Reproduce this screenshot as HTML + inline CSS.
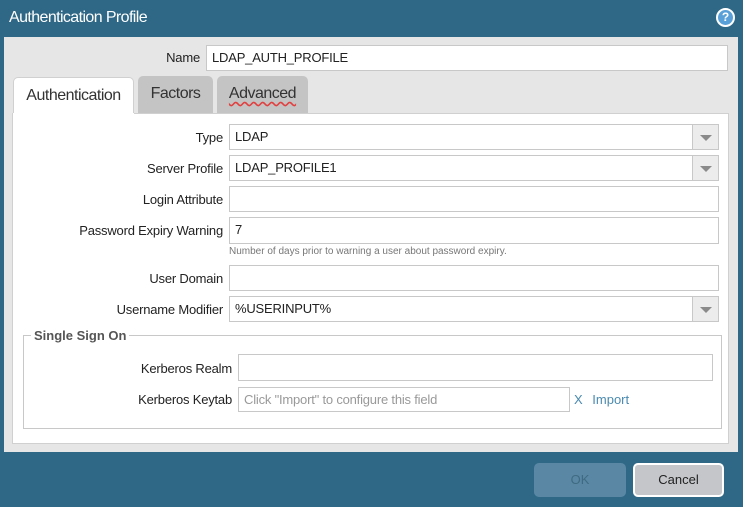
<!DOCTYPE html>
<html><head><style>
*{margin:0;padding:0;box-sizing:border-box}
body{width:743px;height:507px;background:#2f6886;font-family:"Liberation Sans",sans-serif;font-size:13px;color:#222;position:relative;overflow:hidden}
.a{position:absolute}
.lbl{position:absolute;text-align:right;white-space:nowrap;letter-spacing:-0.2px}
.in{position:absolute;background:#fff;border:1px solid #c8c8c8;padding-left:5px;line-height:23px;white-space:nowrap;letter-spacing:-0.2px}
.dd{position:absolute;top:-1px;right:-1px;width:27px;bottom:-1px;background:#ececec;border:1px solid #c8c8c8}
.dd:after{content:"";position:absolute;left:7px;top:10px;border-left:6px solid transparent;border-right:6px solid transparent;border-top:6px solid #8a8a8a}
.tab{position:absolute;border-radius:5px 5px 0 0;text-align:center;font-size:16px;line-height:36px;color:#333;letter-spacing:-0.5px}
</style></head><body>
<div class="a" style="left:9px;top:9px;color:#fff;font-size:16px;letter-spacing:-0.6px">Authentication Profile</div>
<div class="a" style="left:716px;top:8px;width:19px;height:19px;border-radius:50%;background:#5aa0d8;border:2px solid #fff;color:#fff;font-weight:bold;font-size:12px;text-align:center;line-height:15px;">?</div>
<div class="a" style="left:4px;top:37px;width:734px;height:415px;background:#e6e6e6"></div>
<div class="lbl" style="left:100px;width:100px;top:50px">Name</div>
<div class="in" style="left:206px;top:45px;width:522px;height:26px">LDAP_AUTH_PROFILE</div>
<div class="tab" style="left:13px;top:77px;width:121px;height:37px;background:#fff;border:1px solid #d0d0d0;border-bottom:none">Authentication</div>
<div class="tab" style="left:138px;top:76px;width:75px;height:37px;background:#c4c4c4">Factors</div>
<div class="tab" style="left:217px;top:76px;width:91px;height:37px;background:#c4c4c4"><span style="text-decoration:underline wavy #e04040;text-underline-offset:3px">Advanced</span></div>
<div class="a" style="left:12px;top:113px;width:717px;height:331px;background:#fff;border:1px solid #d0d0d0;border-top:none"></div>
<div class="a" style="left:134px;top:113px;width:595px;height:1px;background:#d0d0d0"></div>
<div class="lbl" style="right:520px;top:130px">Type</div>
<div class="in" style="left:229px;top:124px;width:490px;height:26px">LDAP<div class="dd"></div></div>
<div class="lbl" style="right:520px;top:161px">Server Profile</div>
<div class="in" style="left:229px;top:155px;width:490px;height:26px">LDAP_PROFILE1<div class="dd"></div></div>
<div class="lbl" style="right:520px;top:192px">Login Attribute</div>
<div class="in" style="left:229px;top:186px;width:490px;height:26px"></div>
<div class="lbl" style="right:520px;top:223px">Password Expiry Warning</div>
<div class="in" style="left:229px;top:217px;width:490px;height:27px">7</div>
<div class="a" style="left:229px;top:246px;font-size:10px;color:#777">Number of days prior to warning a user about password expiry.</div>
<div class="lbl" style="right:520px;top:271px">User Domain</div>
<div class="in" style="left:229px;top:265px;width:490px;height:26px"></div>
<div class="lbl" style="right:520px;top:302px">Username Modifier</div>
<div class="in" style="left:229px;top:296px;width:490px;height:26px">%USERINPUT%<div class="dd"></div></div>
<div class="a" style="left:23px;top:335px;width:699px;height:94px;border:1px solid #c8c8c8"></div>
<div class="a" style="left:31px;top:328px;background:#fff;padding:0 3px;font-weight:bold;color:#555">Single Sign On</div>
<div class="lbl" style="right:511px;top:361px">Kerberos Realm</div>
<div class="in" style="left:238px;top:354px;width:475px;height:27px"></div>
<div class="lbl" style="right:511px;top:392px">Kerberos Keytab</div>
<div class="in" style="left:238px;top:387px;width:332px;height:25px;color:#999">Click "Import" to configure this field</div>
<div class="a" style="left:574px;top:392px;color:#4a8ab0;word-spacing:6px">X Import</div>
<div class="a" style="left:534px;top:463px;width:92px;height:34px;border-radius:5px;background:#5a88a4;color:#3f6a82;text-align:center;line-height:34px">OK</div>
<div class="a" style="left:633px;top:463px;width:91px;height:34px;border-radius:5px;background:#c4c6ca;border:2px solid #fff;color:#222;text-align:center;line-height:30px">Cancel</div>
</body></html>
